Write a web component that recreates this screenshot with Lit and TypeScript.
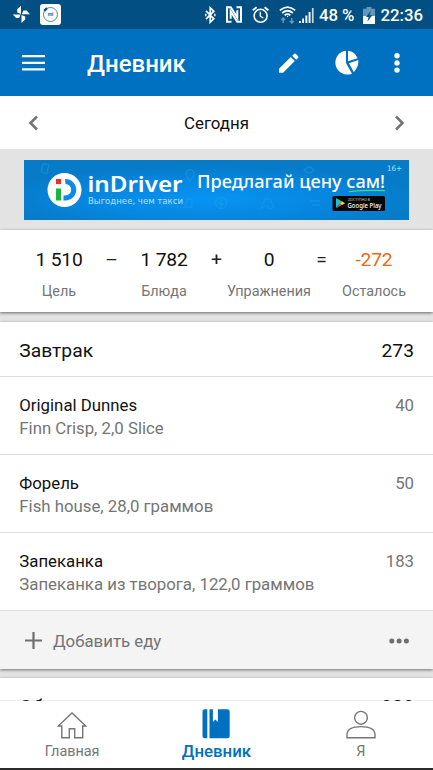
import { LitElement, html, css, svg } from "lit";
import { customElement, property } from "lit/decorators.js";

interface Food {
  name: string;
  detail: string;
  kcal: string;
}

const BREAKFAST: Food[] = [
  { name: "Original Dunnes", detail: "Finn Crisp, 2,0 Slice", kcal: "40" },
  { name: "Форель", detail: "Fish house, 28,0 граммов", kcal: "50" },
  { name: "Запеканка", detail: "Запеканка из творога, 122,0 граммов", kcal: "183" },
];

@customElement("status-bar")
export class StatusBar extends LitElement {
  static styles = css`
    :host { display: flex; align-items: center; height: 29px; box-sizing: border-box; background: #024f83; color: #fff; font-size: 16.8px; font-weight: 500; white-space: nowrap; padding: 0 9px 0 12px; }
    svg { display: block; flex: none; }
    .mi { margin-left: 9px; }
    .space { flex: 1; }
    .nfc { margin-left: 10px; }
    .alarm { margin-left: 10px; }
    .wifi { margin-left: 9px; }
    .signal { margin-left: 3px; }
    .pct { margin-left: 5px; width: 36px; line-height: 20px; letter-spacing: -0.1px; padding-top: 1px; }
    .battery { margin-left: 8px; }
    .time { margin-left: 5.5px; width: 43.5px; line-height: 20px; padding-top: 1px; }
  `;
  render() {
    return html`
      <svg width="19" height="19" viewBox="0 0 19 19" fill="#fff">
        <path d="M9 9V.8L5.200 4.200V7.500zM8.600 9.400H.8L4.200 13H7.200zM9.500 9.900V18L13.200 14.600V11.400zM9.900 9.300H18L14.600 5.600H11.400z"/>
      </svg>
      <svg class="mi" width="21" height="21" viewBox="0 0 21 21">
        <rect width="21" height="21" rx="3" fill="#fff"/>
        <circle cx="10.500" cy="10.500" r="7" fill="none" stroke="#4788b0" stroke-width="1"/>
        <path d="M4.200 6.800L7 4.200" stroke="#0a4f80" stroke-width="2.400"/>
        <text x="10.500" y="12.300" text-anchor="middle" font-size="5" font-weight="700" fill="#17699b">mi</text>
      </svg>
      <span class="space"></span>
      <svg width="12" height="18" viewBox="0 0 12 18" fill="none" stroke="#fff" stroke-width="1.700">
        <path d="M2 4.800L9.800 12.800 6.200 16.200V1.800L9.800 5.200 2 13.200"/><path d="M1.800 7.800v2.400M10.800 7.800v2.400" stroke-width="1.400"/>
      </svg>
      <svg class="nfc" width="16" height="17" viewBox="0 0 16 17" fill="none" stroke="#fff">
        <path d="M5.500 15.700H1V1.300H4.700L11.300 11.500V4.200" stroke-width="2"/>
        <path d="M10.500 1.300H15V15.700H11.300L4.700 5.500V12.800" stroke-width="2"/>
      </svg>
      <svg class="alarm" width="18" height="18" viewBox="0 0 18 18" fill="none" stroke="#fff">
        <circle cx="8.600" cy="9.800" r="6.500" stroke-width="1.600"/><path d="M8.300 5.800v4.400l3 1.800" stroke-width="1.300"/><path d="M.8 4.200L4.600 1.200M16.400 4.200L12.600 1.200" stroke-width="1.800"/>
      </svg>
      <svg class="wifi" width="17" height="18" viewBox="0 0 17 18" fill="none" stroke="#fff" stroke-width="1.700">
        <path d="M.8 4.400Q8.500-2.200 16.200 4.400M3.200 7Q8.500 2.500 13.800 7M5.600 9.300Q8.500 7 11.400 9.300"/><circle cx="8.500" cy="10.500" r=".7" fill="#fff" stroke="none"/>
        <path d="M4.200 17v-5M2.200 14l2-2 2 2M12.800 12v5M10.800 15l2 2 2-2" stroke="#6696b5" stroke-width="1.500"/>
      </svg>
      <svg class="signal" width="15" height="16" viewBox="0 0 15 16" fill="#fff">
        <path d="M0 14h1.800v2H0zM3.200 11.500H5V16H3.200zM6.400 8.500h1.900V16H6.400zM9.600 5h1.900v11H9.600z"/><path d="M12.900 1h1.700v15h-1.700z" fill="#c8dae6"/>
      </svg>
      <span class="pct">48 %</span>
      <svg class="battery" width="12" height="18" viewBox="0 0 12 18">
        <path d="M3.500 1h5v1.800H12V10H0V2.800h3.500z" fill="#6696b5"/><path d="M0 10h12v8H0z" fill="#fff"/>
        <path d="M8 4.500L3 11h2.600L4.400 15.800 9.300 9.300H6.500z" fill="#024f83"/>
      </svg>
      <span class="time">22:36</span>
    `;
  }
}

@customElement("top-bar")
export class TopBar extends LitElement {
  static styles = css`
    :host { display: flex; align-items: center; height: 67px; box-sizing: border-box; background: #0070c0; color: #fff; padding: 0 33px 0 22px; }
    svg { display: block; flex: none; }
    .title { flex: 1; margin-left: 41px; font-size: 24px; font-weight: 500; line-height: 30px; padding-top: 2px; }
    .pie { margin-left: 35px; }
    .dots { margin-left: 34px; }
  `;
  render() {
    return html`
      <svg width="24" height="18" viewBox="0 0 24 18" fill="#fff"><path d="M0 1.100h23v2.200H0zM0 7.700h23v2.200H0zM0 14.300h23v2.200H0z"/></svg>
      <span class="title">Дневник</span>
      <svg width="20" height="20" viewBox="0 0 20 20" fill="#fff"><path d="M0 15.700L11.800 4l4 4L4.100 19.800H0zM13.200 2.800L15 1q1-1 2 0l2 2q1 1 0 2l-1.800 1.800z"/></svg>
      <svg class="pie" width="26" height="26" viewBox="0 0 26 26" fill="#fff">
        <path d="M12 .7v12.400l6 10.600A12 12 0 1 1 12 .7z"/><path d="M14 .7a12 12 0 0 1 9.600 7.500L14 11.300z"/><path d="M24.300 10.100q.8 6.200-4.500 12.100L15 13.200z"/>
      </svg>
      <svg class="dots" width="6" height="20" viewBox="0 0 6 20" fill="#fff"><circle cx="3" cy="2.700" r="2.700"/><circle cx="3" cy="9.900" r="2.700"/><circle cx="3" cy="17.100" r="2.700"/></svg>
    `;
  }
}

@customElement("ad-banner")
export class AdBanner extends LitElement {
  static styles = css`
    :host { display: flex; justify-content: center; height: 81px; box-sizing: border-box; padding-top: 11px; background: #e3e3e3; }
    svg { display: block; }
    .brand { font-family: "Noto Sans", sans-serif; font-weight: 600; font-size: 22px; }
    .light { font-family: "Noto Sans", sans-serif; }
    .sub { font-family: "DejaVu Sans", sans-serif; }
  `;
  render() {
    return html`
      <svg width="385" height="60" viewBox="0 0 385 60">
        <defs>
          <radialGradient id="glow" cx="48%" cy="65%" r="55%"><stop offset="0" stop-color="#0894f4"/><stop offset=".6" stop-color="#0686df"/><stop offset="1" stop-color="#077bc8"/></radialGradient>
        </defs>
        <rect width="385" height="60" fill="url(#glow)"/>
        <g fill="none" stroke="#1ba4ea" stroke-width="1.300" opacity=".45">
          <rect x="18" y="4" width="6" height="9" rx="1" transform="rotate(15 21 8)"/>
          <path d="M166 21q-6-7-3-10t6 0-3 10zM161 47l3-9 4 2v7zM280 10q5-6 10 0-5 6-10 0z"/>
          <circle cx="197" cy="43" r="5.500"/><path d="M198 39l-3 5h4l-3 4M237 48l4-9h5l4 8-4 2-3-3zM286 41h10M288 45h8"/>
        </g>
        <circle cx="40.500" cy="30" r="17" fill="#fff"/>
        <rect x="32" y="19" width="5" height="5" fill="#ee3124"/><rect x="32" y="28.500" width="5" height="12" fill="#16b83b"/>
        <path d="M41 19h.5a10.500 10.500 0 0 1 0 21.500H39.500v-5h2a5.500 5.500 0 0 0 0-11.500z" fill="#0a8bea"/>
        <text class="brand" x="63.500" y="32" textLength="95" lengthAdjust="spacingAndGlyphs" fill="#fff">inDriver</text>
        <text class="sub" x="64" y="44" font-size="9" textLength="95" lengthAdjust="spacingAndGlyphs" fill="#b5e1ff">Выгоднее, чем такси</text>
        <text class="light" x="173" y="27.500" font-size="17.500" font-weight="500" textLength="188" lengthAdjust="spacingAndGlyphs" fill="#fff">Предлагай цену сам!</text>
        <path d="M325 31.700Q343 29.500 361 30.700" fill="none" stroke="#4cd77c" stroke-width="1.200"/>
        <text class="sub" x="363" y="11" font-size="7.500" textLength="15" lengthAdjust="spacingAndGlyphs" fill="#b5e1ff">16+</text>
        <rect x="308.500" y="36" width="52.500" height="15" rx="1.500" fill="#050608"/>
        <path d="M312 38l4.500 5-4.500 5z" fill="#00c8f0"/><path d="M312 38l6 3.500-2 2z" fill="#20d878"/><path d="M312 48.500l6-3.500-2-2z" fill="#f23a50"/><path d="M318 41.200l3 2-3 2-2-2z" fill="#ffcb20"/>
        <text class="light" x="324" y="40.500" font-size="3.400" textLength="22" fill="#ccc">ДОСТУПНО В</text>
        <text class="light" x="323.500" y="47.500" font-size="7.500" font-weight="500" textLength="34" lengthAdjust="spacingAndGlyphs" fill="#fff">Google Play</text>
      </svg>
    `;
  }
}

@customElement("calorie-summary")
export class CalorieSummary extends LitElement {
  static styles = css`
    :host { display: grid; grid-template-columns: 86px 19px 86px 19px 86px 19px 86px; height: 82px; box-sizing: border-box; padding: 17px 16px 0; background: #fff; box-shadow: 0 1px 3px rgba(0, 0, 0, 0.55); text-align: center; white-space: nowrap; align-content: start; position: relative; }
    .value { font-size: 19.250px; line-height: 26px; color: #111; letter-spacing: -0.2px; }
    .over { color: #ee6712; }
    .label { font-size: 14.400px; line-height: 20px; margin-top: 9px; color: #757575; }
    .op { font-size: 19.250px; line-height: 26px; color: #222; }
  `;
  render() {
    const cell = (v: string, l: string, over = false) =>
      html`<div><div class="value ${over ? "over" : ""}">${v}</div><div class="label">${l}</div></div>`;
    const op = (s: string) => html`<div class="op">${s}</div>`;
    return html`${cell("1 510", "Цель")}${op("–")}${cell("1 782", "Блюда")}${op("+")}${cell("0", "Упражнения")}${op("=")}${cell("-272", "Осталось", true)}`;
  }
}

@customElement("meal-card")
export class MealCard extends LitElement {
  @property() name = "";
  @property() total = "";
  @property({ attribute: false }) foods: Food[] = [];
  static styles = css`
    :host { display: block; background: #fff; box-shadow: 0 1px 3px rgba(0, 0, 0, 0.5); }
    .head { display: flex; justify-content: space-between; align-items: center; height: 55px; box-sizing: border-box; padding: 2px 19px 0 19.300px; border-bottom: 1px solid #dedede; font-size: 19.250px; color: #111; }
    .food { display: flex; justify-content: space-between; height: 78px; box-sizing: border-box; padding: 17px 19px 0 19.300px; border-bottom: 1px solid #dedede; font-size: 16.800px; line-height: 23px; color: #757575; white-space: nowrap; }
    .food-name { color: #111; }
    .add { display: flex; align-items: center; height: 58px; box-sizing: border-box; padding: 1px 24px 0 25px; background: #f4f4f4; color: #737373; font-size: 16.800px; }
    .add-label { flex: 1; margin-left: 11px; padding-top: 1px; }
    svg { display: block; flex: none; }
  `;
  render() {
    return html`
      <div class="head"><span>${this.name}</span><span>${this.total}</span></div>
      ${this.foods.map(
        (f) => html`<div class="food"><div><div class="food-name">${f.name}</div><div>${f.detail}</div></div><div>${f.kcal}</div></div>`
      )}
      <div class="add">
        <svg width="17" height="17" viewBox="0 0 17 17" fill="#6e6e6e"><path d="M7.400 0h2.200v7.400H17v2.200H9.600V17H7.400V9.600H0V7.400h7.400z"/></svg>
        <span class="add-label">Добавить еду</span>
        <svg width="20" height="6" viewBox="0 0 20 6" fill="#6e6e6e"><circle cx="2.800" cy="3" r="2.500"/><circle cx="10.100" cy="3" r="2.500"/><circle cx="17.400" cy="3" r="2.500"/></svg>
      </div>
    `;
  }
}

@customElement("bottom-nav")
export class BottomNav extends LitElement {
  static styles = css`
    :host { display: grid; grid-template-columns: 1fr 1fr 1fr; height: 69px; box-sizing: border-box; background: #fff; border-bottom: 2px solid #2b2b2b; box-shadow: 0 -1px 1px rgba(0, 0, 0, 0.06); position: relative; color: #757575; font-size: 14.400px; }
    .tab { display: flex; flex-direction: column; align-items: center; }
    .icon { display: flex; align-items: flex-end; height: 38px; }
    .label { line-height: 20px; margin-top: 3px; }
    .active .label { color: #0070c0; font-size: 16.850px; font-weight: 500; margin-top: 2px; }
    svg { display: block; }
  `;
  private tab(icon: unknown, label: string, active = false) {
    return html`<div class="tab ${active ? "active" : ""}"><div class="icon"><svg width="30" height="30" viewBox="0 0 30 30">${icon}</svg></div><div class="label">${label}</div></div>`;
  }
  render() {
    const home = svg`<path d="M15 4L1.200 17H4.800V28.800H12.300V19.800H17.700V28.800H25.700V17H28.800z" fill="none" stroke="#757575" stroke-width="1.400"/>`;
    const book = svg`<path d="M4 .3H6.300V29.300H4Q1.500 29.300 1.500 26.800V2.800Q1.500 .3 4 .3zM8.500 .3h3.400v12.600L14.400 10.500l2.500 2.400V.3H26.200q2.500 0 2.500 2.500v24q0 2.500-2.500 2.500H8.500z" fill="#0070c0"/>`;
    const person = svg`<g fill="none" stroke="#757575" stroke-width="1.400"><circle cx="15" cy="8.800" r="6.400"/><path d="M1 28.800V25.300Q1.500 17.600 15 17.600T29 25.300V28.800z"/></g>`;
    return html`${this.tab(home, "Главная")}${this.tab(book, "Дневник", true)}${this.tab(person, "Я")}`;
  }
}

@customElement("app-root")
export class AppRoot extends LitElement {
  static styles = css`
    :host { display: flex; flex-direction: column; width: 433px; height: 770px; overflow: hidden; background: #e3e3e3; font-family: Roboto, "Noto Sans", sans-serif; }
    .date { display: flex; align-items: center; justify-content: space-between; height: 53px; padding: 0 28px; background: #fff; color: #111; font-size: 16.850px; }
    .date svg { display: block; }
    .day { padding-top: 1px; }
    .meals { flex: 1; min-height: 0; display: flex; flex-direction: column; gap: 9px; padding-top: 10px; overflow: hidden; }
    .meals meal-card { flex: none; }
  `;
  render() {
    const arrow = (d: string) => html`<svg width="10" height="16" viewBox="0 0 10 16" fill="none" stroke="#757575" stroke-width="2.600"><path d=${d} /></svg>`;
    return html`
      <status-bar></status-bar>
      <top-bar></top-bar>
      <div class="date">${arrow("M9 1.500L2.500 8 9 14.500")}<span class="day">Сегодня</span>${arrow("M1 1.500L7.500 8 1 14.500")}</div>
      <ad-banner></ad-banner>
      <calorie-summary></calorie-summary>
      <div class="meals">
        <meal-card name="Завтрак" total="273" .foods=${BREAKFAST}></meal-card>
        <meal-card name="Обед" total="908"></meal-card>
      </div>
      <bottom-nav></bottom-nav>
    `;
  }
}
